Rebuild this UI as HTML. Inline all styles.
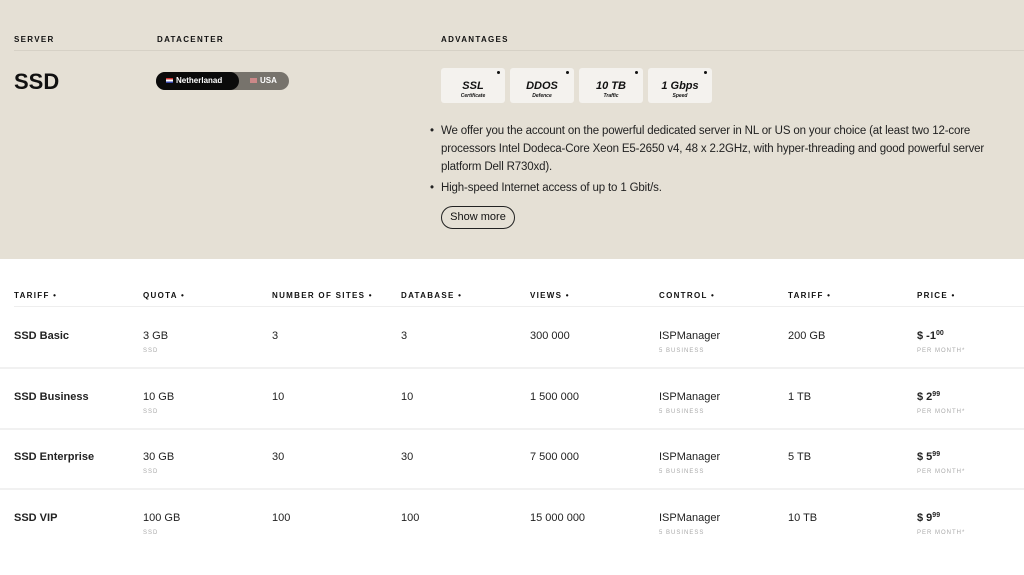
<!DOCTYPE html><html><head><style>
*{margin:0;padding:0;box-sizing:border-box}
body{width:1024px;height:575px;background:#fff;font-family:"Liberation Sans",sans-serif;color:#111;position:relative;overflow:hidden}
.top{position:absolute;left:0;top:0;width:1024px;height:259px;background:#e5e0d5}
.a{position:absolute;white-space:nowrap}
.h{font-size:8px;font-weight:bold;letter-spacing:1.3px}
.line{position:absolute;height:1px;background:#d6d1c6}
.tag{position:absolute;top:68px;width:64px;height:35px;background:#f4f2ee;border-radius:3px;text-align:center;font-style:italic;font-weight:bold}
.tag b{display:block;font-size:11px;margin-top:12px}
.tag i{display:block;font-size:5px;margin-top:1px}
.tag:after{content:"";position:absolute;right:5px;top:3px;width:3px;height:3px;border-radius:50%;background:#111}
.p{font-size:11.5px;color:#222;line-height:18px;letter-spacing:-0.15px}
.c{position:absolute;font-size:11px;color:#222;white-space:nowrap}
.s{position:absolute;font-size:6px;color:#aaa;letter-spacing:1px;white-space:nowrap}
.rl{position:absolute;left:0;width:1024px;height:1px;background:#eee}
sup{font-size:7px;vertical-align:4px;line-height:0}
</style></head><body>
<div class="top"></div>
<div class="a h" style="left:14px;top:35px">SERVER</div>
<div class="a h" style="left:157px;top:35px">DATACENTER</div>
<div class="a h" style="left:441px;top:35px">ADVANTAGES</div>
<div class="line" style="left:14px;top:50px;width:1010px"></div>
<div class="a" style="left:14px;top:69px;font-size:22px;font-weight:bold">SSD</div>
<div class="a" style="left:156px;top:72px;width:133px;height:18px;border-radius:9px;background:#77736c"></div>
<div class="a" style="left:156px;top:72px;width:83px;height:18px;border-radius:9px;background:#0b0b0b;color:#fff;font-size:8px;font-weight:bold;line-height:18px;padding-left:10px"><span style="display:inline-block;width:7px;height:5px;background:linear-gradient(#c33 33%,#fff 33% 66%,#34a 66%);margin-right:3px"></span>Netherlanad</div>
<div class="a" style="left:250px;top:72px;color:#fff;font-size:8px;font-weight:bold;line-height:18px"><span style="display:inline-block;width:7px;height:5px;background:#c88;margin-right:3px"></span>USA</div>
<div class="tag" style="left:441px"><b>SSL</b><i>Certificate</i></div>
<div class="tag" style="left:510px"><b>DDOS</b><i>Defence</i></div>
<div class="tag" style="left:579px"><b>10 TB</b><i>Traffic</i></div>
<div class="tag" style="left:648px"><b>1 Gbps</b><i>Speed</i></div>
<div class="a p" style="left:430px;top:122px">•</div>
<div class="a p" style="left:441px;top:122px;white-space:normal;width:565px">We offer you the account on the powerful dedicated server in NL or US on your choice (at least two 12-core processors Intel Dodeca-Core Xeon E5-2650 v4, 48 x 2.2GHz, with hyper-threading and good powerful server platform Dell R730xd).</div>
<div class="a p" style="left:430px;top:179px">•</div>
<div class="a p" style="left:441px;top:179px">High-speed Internet access of up to 1 Gbit/s.</div>
<div class="a" style="left:441px;top:206px;width:74px;height:23px;border:1px solid #222;border-radius:12px;font-size:11px;line-height:21px;text-align:center">Show more</div>

<div class="a h" style="left:14px;top:291px">TARIFF •</div>
<div class="a h" style="left:143px;top:291px">QUOTA •</div>
<div class="a h" style="left:272px;top:291px">NUMBER OF SITES •</div>
<div class="a h" style="left:401px;top:291px">DATABASE •</div>
<div class="a h" style="left:530px;top:291px">VIEWS •</div>
<div class="a h" style="left:659px;top:291px">CONTROL •</div>
<div class="a h" style="left:788px;top:291px">TARIFF •</div>
<div class="a h" style="left:917px;top:291px">PRICE •</div>
<div class="rl" style="left:14px;top:306px"></div>
<div class="rl" style="top:367px;height:2px;background:#f1f1f1"></div>
<div class="rl" style="top:428px;height:2px;background:#f1f1f1"></div>
<div class="rl" style="top:488px;height:2px;background:#f1f1f1"></div>

<div style="position:absolute;left:0;top:330px">
<div class="c" style="left:14px;font-weight:bold">SSD Basic</div><div class="c" style="left:143px">3 GB</div><div class="s" style="left:143px;top:18px">SSD</div><div class="c" style="left:272px">3</div><div class="c" style="left:401px">3</div><div class="c" style="left:530px">300 000</div><div class="c" style="left:659px">ISPManager</div><div class="s" style="left:659px;top:18px">5 BUSINESS</div><div class="c" style="left:788px">200 GB</div><div class="c" style="left:917px;font-weight:bold">$ -1<sup>00</sup></div><div class="s" style="left:917px;top:18px">PER MONTH*</div></div>
<div style="position:absolute;left:0;top:391px">
<div class="c" style="left:14px;font-weight:bold">SSD Business</div><div class="c" style="left:143px">10 GB</div><div class="s" style="left:143px;top:18px">SSD</div><div class="c" style="left:272px">10</div><div class="c" style="left:401px">10</div><div class="c" style="left:530px">1 500 000</div><div class="c" style="left:659px">ISPManager</div><div class="s" style="left:659px;top:18px">5 BUSINESS</div><div class="c" style="left:788px">1 TB</div><div class="c" style="left:917px;font-weight:bold">$ 2<sup>99</sup></div><div class="s" style="left:917px;top:18px">PER MONTH*</div></div>
<div style="position:absolute;left:0;top:451px">
<div class="c" style="left:14px;font-weight:bold">SSD Enterprise</div><div class="c" style="left:143px">30 GB</div><div class="s" style="left:143px;top:18px">SSD</div><div class="c" style="left:272px">30</div><div class="c" style="left:401px">30</div><div class="c" style="left:530px">7 500 000</div><div class="c" style="left:659px">ISPManager</div><div class="s" style="left:659px;top:18px">5 BUSINESS</div><div class="c" style="left:788px">5 TB</div><div class="c" style="left:917px;font-weight:bold">$ 5<sup>99</sup></div><div class="s" style="left:917px;top:18px">PER MONTH*</div></div>
<div style="position:absolute;left:0;top:512px">
<div class="c" style="left:14px;font-weight:bold">SSD VIP</div><div class="c" style="left:143px">100 GB</div><div class="s" style="left:143px;top:18px">SSD</div><div class="c" style="left:272px">100</div><div class="c" style="left:401px">100</div><div class="c" style="left:530px">15 000 000</div><div class="c" style="left:659px">ISPManager</div><div class="s" style="left:659px;top:18px">5 BUSINESS</div><div class="c" style="left:788px">10 TB</div><div class="c" style="left:917px;font-weight:bold">$ 9<sup>99</sup></div><div class="s" style="left:917px;top:18px">PER MONTH*</div></div>
</body></html>
